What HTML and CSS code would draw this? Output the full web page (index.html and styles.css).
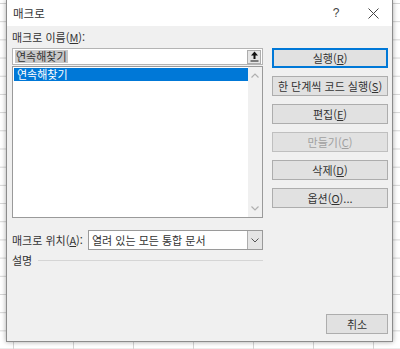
FILE: index.html
```html
<!DOCTYPE html>
<html lang="ko">
<head>
    <meta charset="UTF-8">
    <meta name="viewport" content="width=device-width, initial-scale=1.0">
    <title>매크로</title>
    <link rel="stylesheet" href="styles.css">
</head>
<body>
    <div class="dialog">
        <div class="titlebar">
            <span class="title">매크로</span>
            <span class="help">?</span>
            <span class="close">
                <svg width="11" height="11" viewBox="0 0 11 11"><path d="M0.5 0.5 L10.5 10.5 M10.5 0.5 L0.5 10.5" stroke="#444" stroke-width="1"/></svg>
            </span>
        </div>

        <div class="content">
            <div class="main">
                <div class="left">
                    <div class="label">매크로 이름(<u>M</u>):</div>
                    <div class="namebox">
                        <div class="namefield"><span class="sel">연속해찾기</span></div>
                        <div class="upbtn">
                            <svg width="9" height="11" viewBox="0 0 9 11"><path d="M4.5 0.5 L8 4.5 L5.5 4.5 L5.5 8 L3.5 8 L3.5 4.5 L1 4.5 Z" fill="#111"/><rect x="0.5" y="9.5" width="8" height="1" fill="#111"/></svg>
                        </div>
                    </div>
                    <div class="listbox">
                        <div class="items">
                            <div class="item active">연속해찾기</div>
                        </div>
                        <div class="scrollbar">
                            <span class="arrow"><svg width="8" height="5" viewBox="0 0 8 5"><path d="M0.5 4.5 L4 1 L7.5 4.5" fill="none" stroke="#b0b0b0" stroke-width="1.2"/></svg></span>
                            <span class="arrow"><svg width="8" height="5" viewBox="0 0 8 5"><path d="M0.5 0.5 L4 4 L7.5 0.5" fill="none" stroke="#b0b0b0" stroke-width="1.2"/></svg></span>
                        </div>
                    </div>
                </div>

                <div class="buttons">
                    <button class="btn default">실행(<u>R</u>)</button>
                    <button class="btn">한 단계씩 코드 실행(<u>S</u>)</button>
                    <button class="btn">편집(<u>E</u>)</button>
                    <button class="btn disabled">만들기(<u>C</u>)</button>
                    <button class="btn">삭제(<u>D</u>)</button>
                    <button class="btn">옵션(<u>O</u>)...</button>
                </div>
            </div>

            <div class="location">
                <span class="loclabel">매크로 위치(<u>A</u>):</span>
                <div class="selectbox">
                    <span class="selval">열려 있는 모든 통합 문서</span>
                    <span class="drop"><svg width="8" height="5" viewBox="0 0 8 5"><path d="M0.5 0.5 L4 4 L7.5 0.5" fill="none" stroke="#555" stroke-width="1"/></svg></span>
                </div>
            </div>

            <div class="desc">
                <span>설명</span>
                <span class="rule"></span>
            </div>

            <div class="footer">
                <button class="btn cancel">취소</button>
            </div>
        </div>
    </div>
</body>
</html>
```

FILE: styles.css
```css
body {
    margin: 0;
    width: 400px;
    height: 349px;
    overflow: hidden;
    background-color: #fff;
    background-image:
        linear-gradient(to right, #d4d4d4 1px, transparent 1px),
        linear-gradient(to bottom, #d4d4d4 1px, transparent 1px);
    background-size: 60px 18.2px;
    background-position: 13px 3px;
    font-family: "Noto Sans CJK KR", "Noto Sans", sans-serif;
    font-size: 11px;
    color: #333;
}
.dialog {
    margin-left: 6px;
    width: 385px;
    height: 341px;
    border: 1px solid #8c8c8c;
    border-top: none;
    background: #f0f0f0;
    box-shadow: 0 0 5px rgba(0,0,0,0.35);
    display: flex;
    flex-direction: column;
}
.titlebar {
    height: 26px;
    background: #fff;
    display: flex;
    align-items: center;
    padding-left: 6px;
}
.title {
    font-size: 11.5px;
}
.help {
    margin-left: auto;
    width: 36px;
    text-align: center;
    font-family: "Liberation Sans", sans-serif;
    font-size: 12px;
    color: #444;
}
.close {
    width: 38px;
    display: flex;
    justify-content: center;
}
.content {
    flex: 1;
    display: flex;
    flex-direction: column;
    padding: 3px 4px 7px 5px;
}
.main {
    display: flex;
    gap: 9px;
}
.left {
    width: 251px;
}
.label {
    height: 16px;
    line-height: 16px;
}
.namebox {
    margin-top: 3px;
    margin-bottom: 1px;
    height: 17px;
    box-sizing: border-box;
    border: 1px solid #b4b4b4;
    background: #fff;
    display: flex;
    align-items: center;
}
.namefield {
    flex: 1;
    padding-left: 2px;
    display: flex;
}
.sel {
    background: #c8c8c8;
    line-height: 13px;
    padding: 0 1px;
}
.upbtn {
    width: 14px;
    height: 14px;
    margin-right: 1px;
    box-sizing: border-box;
    border: 1px solid #adadad;
    background: #e5e5e5;
    display: flex;
    align-items: center;
    justify-content: center;
}
.listbox {
    height: 152px;
    box-sizing: border-box;
    border: 1px solid #9a9a9a;
    background: #fff;
    display: flex;
}
.items {
    flex: 1;
    padding: 1px 0 0 1px;
}
.item {
    height: 13px;
    line-height: 13px;
    padding-left: 3px;
}
.item.active {
    background: #0078d7;
    color: #fff;
}
.scrollbar {
    width: 14px;
    background: #f0f0f0;
    display: flex;
    flex-direction: column;
    justify-content: space-between;
}
.arrow {
    height: 17px;
    display: flex;
    align-items: center;
    justify-content: center;
}
.buttons {
    width: 116px;
    padding-top: 19px;
    display: flex;
    flex-direction: column;
    gap: 8px;
}
.btn {
    height: 20px;
    padding: 0;
    box-sizing: border-box;
    border: 1px solid #adadad;
    background: #e1e1e1;
    font-family: inherit;
    font-size: 11px;
    color: #333;
    line-height: 16px;
}
.btn.default {
    border-color: #0078d7;
    box-shadow: inset 0 0 0 1px #0078d7;
}
.btn.disabled {
    color: #a0a0a0;
    border-color: #bfbfbf;
}
.location {
    margin-top: 12px;
    height: 20px;
    width: 251px;
    display: flex;
    align-items: center;
}
.loclabel {
    width: 76px;
}
.selectbox {
    flex: 1;
    height: 20px;
    box-sizing: border-box;
    border: 1px solid #9a9a9a;
    background: #fff;
    display: flex;
    align-items: center;
}
.selval {
    flex: 1;
    padding-left: 3px;
}
.drop {
    width: 15px;
    height: 18px;
    box-sizing: border-box;
    border-left: 1px solid #adadad;
    background: #e5e5e5;
    display: flex;
    align-items: center;
    justify-content: center;
}
.desc {
    margin-top: 2px;
    width: 251px;
    height: 16px;
    line-height: 16px;
    display: flex;
    align-items: center;
}
.rule {
    flex: 1;
    height: 1px;
    margin-left: 6px;
    background: #d5d5d5;
}
.footer {
    margin-top: auto;
    display: flex;
    justify-content: flex-end;
}
.btn.cancel {
    width: 62px;
}
```
